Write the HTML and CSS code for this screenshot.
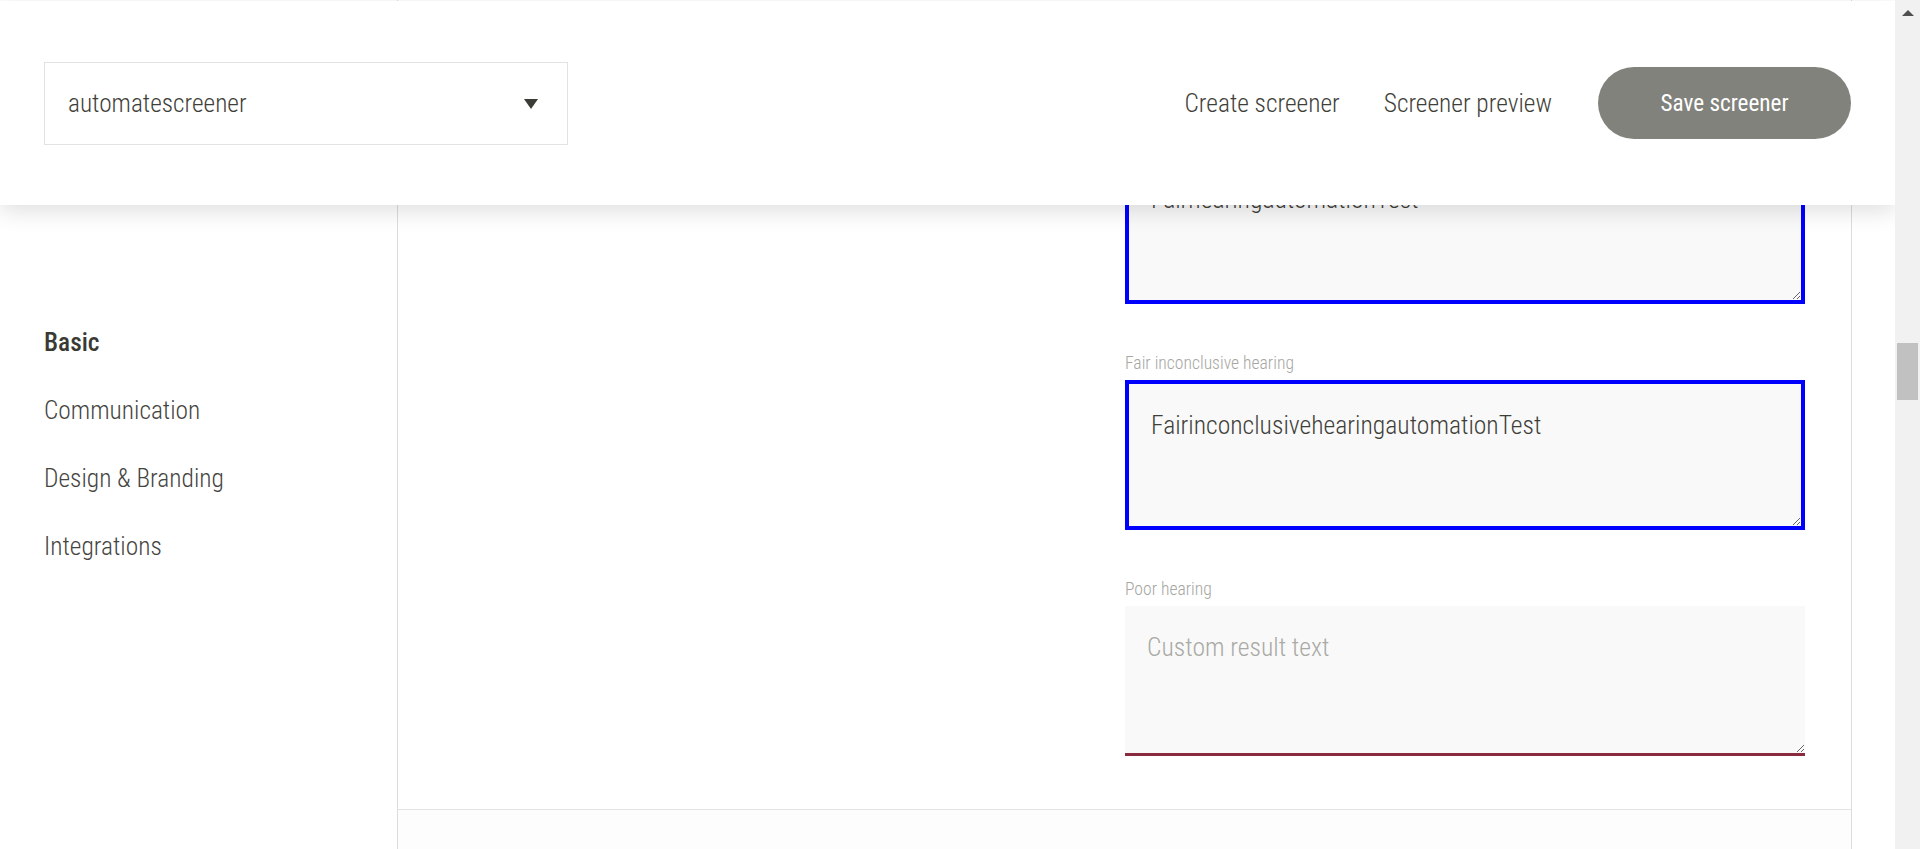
FILE: index.html
```html
<!DOCTYPE html>
<html lang="en">
<head>
<meta charset="utf-8">
<title>Screener</title>
<link rel="stylesheet" href="styles.css">
</head>
<body>
<div class="app">
  <div class="page">
    <header class="topbar">
      <div class="select">
        <span class="select-value">automatescreener</span>
        <span class="select-arrow"></span>
      </div>
      <nav class="actions">
        <a class="action-link">Create screener</a>
        <a class="action-link">Screener preview</a>
        <button class="save-btn">Save screener</button>
      </nav>
    </header>

    <div class="layout">
      <aside class="sidenav">
        <ul class="sidenav-list">
          <li class="sidenav-item active">Basic</li>
          <li class="sidenav-item">Communication</li>
          <li class="sidenav-item">Design &amp; Branding</li>
          <li class="sidenav-item">Integrations</li>
        </ul>
      </aside>

      <main class="main">
        <section class="results">
          <div class="results-intro"></div>
          <div class="fields">
            <div class="field">
              <label class="field-label">Fair hearing</label>
              <textarea class="field-input highlighted">FairhearingautomationTest</textarea>
            </div>
            <div class="field">
              <label class="field-label">Fair inconclusive hearing</label>
              <textarea class="field-input highlighted">FairinconclusivehearingautomationTest</textarea>
            </div>
            <div class="field">
              <label class="field-label">Poor hearing</label>
              <textarea class="field-input underlined" placeholder="Custom result text"></textarea>
            </div>
          </div>
        </section>
        <section class="next-section"></section>
      </main>
      <div class="gutter"></div>
    </div>
  </div>

  <div class="scrollbar">
    <span class="scroll-up"></span>
    <div class="scroll-track"><div class="scroll-thumb"></div></div>
  </div>
</div>
</body>
</html>
```
FILE: styles.css
```css
* { box-sizing: border-box; }

html, body {
  margin: 0;
  padding: 0;
  width: 100%;
  height: 100%;
  overflow: hidden;
  background: #ffffff;
}

body {
  font-family: "Roboto", "Liberation Sans", sans-serif;
  font-stretch: condensed;
  font-weight: 350;
  color: #3f3f3a;
}

.app {
  display: flex;
  height: 849px;
}

.page {
  position: relative;
  flex: 1;
  overflow: hidden;
}

/* ---------- fixed top bar ---------- */
.topbar {
  position: absolute;
  top: 1px;
  left: 0;
  right: 0;
  height: 204px;
  z-index: 10;
  background: #ffffff;
  box-shadow: 0 6px 22px rgba(0, 0, 0, 0.13);
  display: flex;
  align-items: center;
  justify-content: space-between;
  padding: 0 44px;
}

.select {
  width: 524px;
  height: 83px;
  border: 1px solid #e2e2e2;
  display: flex;
  align-items: center;
  justify-content: space-between;
  padding: 0 29px 0 23px;
  margin-top: 1px;
}

.select-value {
  font-size: 25.3px;
  color: #3f3f3a;
}

.select-arrow {
  width: 0;
  height: 0;
  border-left: 7.5px solid transparent;
  border-right: 7.5px solid transparent;
  border-top: 10px solid #3c3c36;
}

.actions {
  display: flex;
  align-items: center;
}

.action-link {
  font-size: 25.4px;
  color: #3f3f3a;
  margin-right: 44px;
  cursor: pointer;
}

.action-link + .action-link {
  margin-right: 46px;
}

.save-btn {
  width: 253px;
  height: 72px;
  border: none;
  border-radius: 36px;
  background: #82827d;
  color: #ffffff;
  font-family: inherit;
  font-stretch: condensed;
  font-weight: 400;
  font-size: 23.2px;
  cursor: pointer;
}

/* ---------- main layout ---------- */
.layout {
  display: flex;
  height: 100%;
}

.sidenav {
  width: 398px;
  flex: none;
  border-right: 1px solid #dcdcdc;
  padding: 308px 0 0 44px;
}

.sidenav-list {
  list-style: none;
  margin: 0;
  padding: 0;
}

.sidenav-item {
  font-size: 25.4px;
  line-height: 68px;
  color: #45453f;
}

.sidenav-item.active {
  font-weight: 500;
  color: #3a3a35;
}

.main {
  width: 1454px;
  flex: none;
  border-right: 1px solid #dcdcdc;
  display: flex;
  flex-direction: column;
}

.gutter {
  flex: 1;
}

.results {
  display: grid;
  grid-template-columns: 1fr 680px;
  padding: 128px 46px 53px 0;
  border-bottom: 1px solid #e3e3e3;
}

.fields {
  display: flex;
  flex-direction: column;
  gap: 50px;
}

.field {
  display: flex;
  flex-direction: column;
}

.field-label {
  font-size: 17.6px;
  line-height: 18px;
  color: #a6a6a2;
  margin-bottom: 8px;
}

.field-input {
  display: block;
  width: 100%;
  height: 150px;
  margin: 0;
  padding: 25px 22px;
  background: #f9f9f9;
  border: none;
  outline: none;
  resize: vertical;
  font-family: inherit;
  font-stretch: condensed;
  font-weight: 350;
  font-size: 25.6px;
  line-height: 1.3;
  color: #3f3f3a;
}

.field-input::placeholder {
  color: #a9a9a5;
  font-size: 25.6px;
}

.field-input.highlighted {
  border: 4px solid #0000ff;
}

.field-input.underlined {
  border-bottom: 3px solid #8a2a3e;
}

.next-section {
  flex: 1;
  background: #fdfdfd;
}

/* ---------- scrollbar ---------- */
.scrollbar {
  width: 25px;
  flex: none;
  background: #f1f1f1;
  display: flex;
  flex-direction: column;
  align-items: center;
}

.scroll-up {
  margin-top: 10px;
  width: 0;
  height: 0;
  border-left: 6px solid transparent;
  border-right: 6px solid transparent;
  border-bottom: 6px solid #505050;
}

.scroll-track {
  flex: 1;
  width: 100%;
  padding: 327px 2px 0;
}

.scroll-thumb {
  height: 57px;
  background: #c1c1c1;
}
```
